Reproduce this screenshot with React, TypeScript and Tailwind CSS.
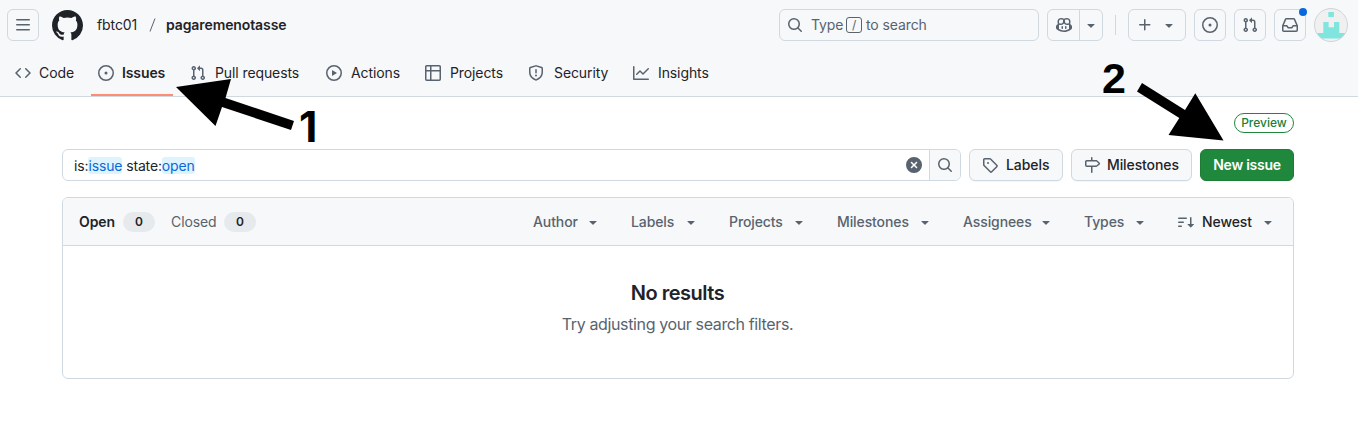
import type { ReactNode } from "react";

const paths = {
  bars: "M1 2.75A.75.75 0 0 1 1.75 2h12.5a.75.75 0 0 1 0 1.5H1.75A.75.75 0 0 1 1 2.75Zm0 5A.75.75 0 0 1 1.75 7h12.5a.75.75 0 0 1 0 1.5H1.75A.75.75 0 0 1 1 7.75ZM1.75 12h12.5a.75.75 0 0 1 0 1.5H1.75a.75.75 0 0 1 0-1.5Z",
  github:
    "M8 0c4.42 0 8 3.58 8 8a8.013 8.013 0 0 1-5.45 7.59c-.4.08-.55-.17-.55-.38 0-.27.01-1.13.01-2.2 0-.75-.25-1.23-.54-1.48 1.78-.2 3.65-.88 3.65-3.95 0-.88-.31-1.59-.82-2.15.08-.2.36-1.02-.08-2.12 0 0-.67-.22-2.2.82-.64-.18-1.32-.27-2-.27-.68 0-1.36.09-2 .27-1.53-1.03-2.2-.82-2.2-.82-.44 1.1-.16 1.92-.08 2.12-.51.56-.82 1.28-.82 2.15 0 3.06 1.86 3.75 3.64 3.95-.23.2-.44.55-.51 1.07-.46.21-1.61.55-2.33-.66-.15-.24-.6-.83-1.23-.82-.67.01-.27.38.01.53.34.19.73.9.82 1.13.16.45.68 1.31 2.69.94 0 .67.01 1.3.01 1.49 0 .21-.15.45-.55.38A7.995 7.995 0 0 1 0 8c0-4.42 3.58-8 8-8Z",
  code: "m11.28 3.22 4.25 4.25a.75.75 0 0 1 0 1.06l-4.25 4.25a.749.749 0 0 1-1.275-.326.749.749 0 0 1 .215-.734L13.94 8l-3.72-3.72a.749.749 0 0 1 .326-1.275.749.749 0 0 1 .734.215Zm-6.56 0a.751.751 0 0 1 1.042.018.751.751 0 0 1 .018 1.042L2.06 8l3.72 3.72a.749.749 0 0 1-.326 1.275.749.749 0 0 1-.734-.215L.47 8.53a.75.75 0 0 1 0-1.06Z",
  issue:
    "M8 9.5a1.5 1.5 0 1 0 0-3 1.5 1.5 0 0 0 0 3ZM8 0a8 8 0 1 1 0 16A8 8 0 0 1 8 0ZM1.5 8a6.5 6.5 0 1 0 13 0 6.5 6.5 0 0 0-13 0Z",
  pull: "M1.5 3.25a2.25 2.25 0 1 1 3 2.122v5.256a2.251 2.251 0 1 1-1.5 0V5.372A2.25 2.25 0 0 1 1.5 3.25Zm5.677-.177L9.573.677A.25.25 0 0 1 10 .854V2.5h1A2.5 2.5 0 0 1 13.5 5v5.628a2.251 2.251 0 1 1-1.5 0V5a1 1 0 0 0-1-1h-1v1.646a.25.25 0 0 1-.427.177L7.177 3.427a.25.25 0 0 1 0-.354ZM3.75 2.5a.75.75 0 1 0 0 1.5.75.75 0 0 0 0-1.5Zm0 9.5a.75.75 0 1 0 0 1.5.75.75 0 0 0 0-1.5Zm8.25.75a.75.75 0 1 0 1.5 0 .75.75 0 0 0-1.5 0Z",
  play: "M8 0a8 8 0 1 1 0 16A8 8 0 0 1 8 0ZM1.5 8a6.5 6.5 0 1 0 13 0 6.5 6.5 0 0 0-13 0Zm4.879-2.773 4.264 2.559a.25.25 0 0 1 0 .428l-4.264 2.559A.25.25 0 0 1 6 10.559V5.442a.25.25 0 0 1 .379-.215Z",
  table:
    "M0 1.75C0 .784.784 0 1.75 0h12.5C15.216 0 16 .784 16 1.75v12.5A1.75 1.75 0 0 1 14.25 16H1.75A1.75 1.75 0 0 1 0 14.25ZM6.5 6.5v8h7.75a.25.25 0 0 0 .25-.25V6.5Zm8-1.5V1.75a.25.25 0 0 0-.25-.25H6.5V5Zm-13 1.5v7.75c0 .138.112.25.25.25H5v-8ZM5 5V1.5H1.75a.25.25 0 0 0-.25.25V5Z",
  shield:
    "M7.467.133a1.748 1.748 0 0 1 1.066 0l5.25 1.68A1.75 1.75 0 0 1 15 3.48V7c0 1.566-.32 3.182-1.303 4.682-.983 1.498-2.585 2.813-5.032 3.855a1.697 1.697 0 0 1-1.33 0c-2.447-1.042-4.049-2.357-5.032-3.855C1.32 10.182 1 8.566 1 7V3.48a1.75 1.75 0 0 1 1.217-1.667Zm.61 1.429a.25.25 0 0 0-.153 0l-5.25 1.68a.25.25 0 0 0-.174.238V7c0 1.358.275 2.666 1.057 3.86.784 1.194 2.121 2.34 4.366 3.297a.196.196 0 0 0 .154 0c2.245-.956 3.582-2.104 4.366-3.298C13.225 9.666 13.5 8.36 13.5 7V3.48a.251.251 0 0 0-.174-.237l-5.25-1.68ZM8.75 4.75v3a.75.75 0 0 1-1.5 0v-3a.75.75 0 0 1 1.5 0ZM9 10.5a1 1 0 1 1-2 0 1 1 0 0 1 2 0Z",
  graph:
    "M1.5 1.75V13.5h13.75a.75.75 0 0 1 0 1.5H.75a.75.75 0 0 1-.75-.75V1.75a.75.75 0 0 1 1.5 0Zm14.28 2.53-5.25 5.25a.75.75 0 0 1-1.06 0L7 7.06 4.28 9.78a.751.751 0 0 1-1.042-.018.751.751 0 0 1-.018-1.042l3.25-3.25a.75.75 0 0 1 1.06 0L10 7.94l4.72-4.72a.751.751 0 0 1 1.042.018.751.751 0 0 1 .018 1.042Z",
  search:
    "M10.68 11.74a6 6 0 0 1-7.922-8.982 6 6 0 0 1 8.982 7.922l3.04 3.04a.749.749 0 0 1-.326 1.275.749.749 0 0 1-.734-.215ZM11.5 7a4.499 4.499 0 1 0-8.997 0A4.499 4.499 0 0 0 11.5 7Z",
  copilot:
    "M7.998 15.035c-4.562 0-7.873-2.914-7.998-3.749V9.338c.085-.628.677-1.686 1.588-2.065.013-.07.024-.143.036-.218.029-.183.06-.384.126-.612-.201-.508-.254-1.084-.254-1.656 0-.87.128-1.769.693-2.484.579-.733 1.494-1.124 2.724-1.261 1.206-.134 2.262.034 2.944.765.05.053.096.108.139.165.044-.057.094-.112.143-.165.682-.731 1.738-.899 2.944-.765 1.23.137 2.145.528 2.724 1.261.566.715.693 1.614.693 2.484 0 .572-.053 1.148-.254 1.656.066.228.098.429.126.612.012.076.024.148.037.218.924.385 1.522 1.471 1.591 2.095v1.872c0 .766-3.351 3.795-8.002 3.795Zm0-1.485c2.28 0 4.584-1.11 5.002-1.433V7.862l-.023-.116c-.49.21-1.075.291-1.727.291-1.146 0-2.059-.327-2.71-.991A3.222 3.222 0 0 1 8 6.303a3.24 3.24 0 0 1-.544.743c-.65.664-1.563.991-2.71.991-.652 0-1.236-.081-1.727-.291l-.023.116v4.255c.419.323 2.722 1.433 5.002 1.433ZM6.762 2.83c-.193-.206-.637-.413-1.682-.297-1.019.113-1.479.404-1.713.7-.247.312-.369.789-.369 1.554 0 .793.129 1.171.308 1.371.162.181.519.379 1.442.379.853 0 1.339-.235 1.638-.54.315-.322.527-.827.617-1.553.117-.935-.037-1.395-.241-1.614Zm4.155-.297c-1.044-.116-1.488.091-1.681.297-.204.219-.359.679-.242 1.614.091.726.303 1.231.618 1.553.299.305.784.54 1.638.54.922 0 1.28-.198 1.442-.379.179-.2.308-.578.308-1.371 0-.765-.123-1.242-.37-1.554-.233-.296-.693-.587-1.713-.7ZM6.25 9.037a.75.75 0 0 1 .75.75v1.501a.75.75 0 0 1-1.5 0V9.787a.75.75 0 0 1 .75-.75Zm4.25.75v1.501a.75.75 0 0 1-1.5 0V9.787a.75.75 0 0 1 1.5 0Z",
  caret: "m4.427 7.427 3.396 3.396a.25.25 0 0 0 .354 0l3.396-3.396A.25.25 0 0 0 11.396 7H4.604a.25.25 0 0 0-.177.427Z",
  plus: "M7.75 2a.75.75 0 0 1 .75.75V7h4.25a.75.75 0 0 1 0 1.5H8.5v4.25a.75.75 0 0 1-1.5 0V8.5H2.75a.75.75 0 0 1 0-1.5H7V2.75A.75.75 0 0 1 7.75 2Z",
  inbox:
    "M2.8 2.06A1.75 1.75 0 0 1 4.41 1h7.18c.7 0 1.333.417 1.61 1.06l2.74 6.395c.04.093.06.194.06.295v4.5A1.75 1.75 0 0 1 14.25 15H1.75A1.75 1.75 0 0 1 0 13.25v-4.5c0-.101.02-.202.06-.295Zm1.61.44a.25.25 0 0 0-.23.152L1.887 8H4.75a.75.75 0 0 1 .6.3L6.625 10h2.75l1.275-1.7a.75.75 0 0 1 .6-.3h2.863L11.82 2.652a.25.25 0 0 0-.23-.152Zm10.09 7h-2.875l-1.275 1.7a.75.75 0 0 1-.6.3h-3.5a.75.75 0 0 1-.6-.3L4.375 9.5H1.5v3.75c0 .138.112.25.25.25h12.5a.25.25 0 0 0 .25-.25Z",
  clear:
    "M2.343 13.657A8 8 0 1 1 13.658 2.343 8 8 0 0 1 2.343 13.657ZM6.03 4.97a.751.751 0 0 0-1.042.018.751.751 0 0 0-.018 1.042L6.94 8 4.97 9.97a.749.749 0 0 0 .326 1.275.749.749 0 0 0 .734-.215L8 9.06l1.97 1.97a.749.749 0 0 0 1.275-.326.749.749 0 0 0-.215-.734L9.06 8l1.97-1.97a.749.749 0 0 0-.326-1.275.749.749 0 0 0-.734.215L8 6.94Z",
  tag: "M1 7.775V2.75C1 1.784 1.784 1 2.75 1h5.025c.464 0 .91.184 1.238.513l6.25 6.25a1.75 1.75 0 0 1 0 2.474l-5.026 5.026a1.75 1.75 0 0 1-2.474 0l-6.25-6.25A1.752 1.752 0 0 1 1 7.775Zm1.5 0c0 .066.026.13.073.177l6.25 6.25a.25.25 0 0 0 .354 0l5.025-5.025a.25.25 0 0 0 0-.354l-6.25-6.25a.25.25 0 0 0-.177-.073H2.75a.25.25 0 0 0-.25.25ZM6 5a1 1 0 1 1 0 2 1 1 0 0 1 0-2Z",
  milestone:
    "M7.75 0a.75.75 0 0 1 .75.75V3h3.634c.414 0 .814.147 1.13.414l2.07 1.75a1.75 1.75 0 0 1 0 2.672l-2.07 1.75a1.75 1.75 0 0 1-1.13.414H8.5v5.25a.75.75 0 0 1-1.5 0V10H2.75A1.75 1.75 0 0 1 1 8.25v-3.5C1 3.784 1.784 3 2.75 3H7V.75A.75.75 0 0 1 7.75 0Zm4.384 8.5a.25.25 0 0 0 .161-.06l2.07-1.75a.248.248 0 0 0 0-.38l-2.07-1.75a.25.25 0 0 0-.161-.06H2.75a.25.25 0 0 0-.25.25v3.5c0 .138.112.25.25.25h9.384Z",
  sort: "M0 4.25a.75.75 0 0 1 .75-.75h7.5a.75.75 0 0 1 0 1.5H.75A.75.75 0 0 1 0 4.25Zm0 4a.75.75 0 0 1 .75-.75h4.5a.75.75 0 0 1 0 1.5H.75A.75.75 0 0 1 0 8.25Zm0 4a.75.75 0 0 1 .75-.75h2.5a.75.75 0 0 1 0 1.5H.75a.75.75 0 0 1-.75-.75ZM13.5 10h2.25a.25.25 0 0 1 .177.427l-3 3a.25.25 0 0 1-.354 0l-3-3A.25.25 0 0 1 9.75 10H12V3.75a.75.75 0 0 1 1.5 0V10Z",
};

type IconName = keyof typeof paths;

function Icon({ name, className = "size-4 text-[#59636e]" }: { name: IconName; className?: string }) {
  return (
    <svg viewBox="0 0 16 16" className={`shrink-0 ${className}`} fill="currentColor" fillRule="evenodd" aria-hidden="true">
      <path d={paths[name]} />
    </svg>
  );
}

const tabs: { icon: IconName; label: string; width: string; gap: string; active?: boolean }[] = [
  { icon: "code", label: "Code", width: "w-[75px]", gap: "gap-2" },
  { icon: "issue", label: "Issues", width: "w-[84px]", gap: "gap-2", active: true },
  { icon: "pull", label: "Pull requests", width: "w-[128px]", gap: "gap-[9px]" },
  { icon: "play", label: "Actions", width: "w-[91px]", gap: "gap-[9px]" },
  { icon: "table", label: "Projects", width: "w-[95px]", gap: "gap-[9px]" },
  { icon: "shield", label: "Security", width: "w-[97px]", gap: "gap-[10px]" },
  { icon: "graph", label: "Insights", width: "w-[94px]", gap: "gap-[9px]" },
];

const filters = [
  { label: "Author", width: "w-[68px]" },
  { label: "Labels", width: "w-[68px]" },
  { label: "Projects", width: "w-[78px]" },
  { label: "Milestones", width: "w-[96px]" },
  { label: "Assignees", width: "w-[91px]" },
  { label: "Types", width: "w-[64px]" },
];

function HeaderButton({ children }: { children: ReactNode }) {
  return (
    <button className="relative flex size-8 shrink-0 items-center justify-center rounded-md border border-[#d1d9e0]">
      {children}
    </button>
  );
}

function Header() {
  return (
    <header className="flex h-[97px] flex-col border-b border-[#d1d9e0] bg-[#f6f8fa]">
      <div className="flex h-[50px] items-center pr-[10px] pl-[7px]">
        <HeaderButton>
          <Icon name="bars" />
        </HeaderButton>
        <Icon name="github" className="ml-[13px] h-[31px] w-[31px] text-[#1f2328]" />
        <span className="ml-[14px] w-[42px]">fbtc01</span>
        <svg viewBox="0 0 7 16" className="ml-[10px] h-4 w-[7px] shrink-0" aria-hidden="true">
          <path d="M1 14.5 6 1.5" stroke="#59636e" strokeWidth="1" />
        </svg>
        <span className="ml-[10px] font-semibold">pagaremenotasse</span>
        <div className="ml-auto flex items-center">
          <div className="flex h-8 w-[260px] items-center rounded-md border border-[#d1d9e0] pl-[7px] text-[#59636e]">
            <Icon name="search" />
            <span className="ml-2 w-[30px]">Type</span>
            <kbd className="ml-[5px] flex h-4 w-4 items-center justify-center rounded-[3px] border border-[#59636e] font-[Inter] text-xs">
              /
            </kbd>
            <span className="ml-1">to search</span>
          </div>
          <div className="ml-2 flex h-8 w-14 rounded-md border border-[#d1d9e0]">
            <div className="flex w-8 items-center justify-center border-r border-[#d1d9e0]">
              <Icon name="copilot" />
            </div>
            <div className="flex flex-1 items-center justify-center">
              <Icon name="caret" />
            </div>
          </div>
          <div className="ml-3 h-5 w-px bg-[#d1d9e0]" />
          <div className="ml-3 flex h-8 w-[58px] items-center justify-between rounded-md border border-[#d1d9e0] px-2">
            <Icon name="plus" />
            <Icon name="caret" />
          </div>
          <div className="ml-2 flex gap-2">
            <HeaderButton>
              <Icon name="issue" />
            </HeaderButton>
            <HeaderButton>
              <Icon name="pull" />
            </HeaderButton>
            <HeaderButton>
              <Icon name="inbox" />
              <span className="absolute -top-[2px] -right-[2px] size-2 rounded-full bg-[#0969da]" />
            </HeaderButton>
          </div>
          <svg viewBox="0 0 34 34" className="ml-2 h-[34px] w-[34px] shrink-0" aria-hidden="true">
            <clipPath id="avatar">
              <circle cx="17" cy="17" r="16.5" />
            </clipPath>
            <g clipPath="url(#avatar)">
              <path fill="#f0f0f0" d="M0 0h34v34H0z" />
              <path fill="#80e5df" d="M14.300 4h5.600v5h-5.600zM9.300 14h5.300v5.300H20V14h5.300v11H31v5.500H3.500V25h5.800z" />
            </g>
            <circle cx="17" cy="17" r="16.5" fill="none" stroke="#d0d4d8" />
          </svg>
        </div>
      </div>
      <nav className="flex h-[46px] items-stretch pl-[7px]">
        {tabs.map((tab) => (
          <a key={tab.label} className={`mr-2 flex shrink-0 flex-col ${tab.width}`}>
            <span className={`flex h-11 items-center pt-[2px] pl-2 ${tab.gap}`}>
              <Icon name={tab.icon} />
              <span className={tab.active ? "font-semibold" : ""}>{tab.label}</span>
            </span>
            {tab.active && <span className="ml-px h-[2px] w-[82px] bg-[#fd8c73]" />}
          </a>
        ))}
      </nav>
    </header>
  );
}

function Toolbar() {
  return (
    <div className="mt-4 flex h-8 gap-2">
      <div className="flex w-[899px] overflow-hidden rounded-md border border-[#d1d9e0]">
        <div className="flex flex-1 items-center pr-[7px] pl-[11px]">
          <p className="flex-1 pt-[2px] tracking-[-0.14px] whitespace-pre">
            is:<span className="rounded-[3px] bg-[#ddf4ff] text-[#0969da]">issue</span> state:
            <span className="rounded-[3px] bg-[#ddf4ff] text-[#0969da]">open</span>
          </p>
          <Icon name="clear" />
        </div>
        <button className="flex w-[31px] items-center justify-center border-l border-[#d1d9e0] bg-[#f6f8fa]">
          <Icon name="search" />
        </button>
      </div>
      <button className="flex w-[94px] items-center gap-2 rounded-md border border-[#d1d9e0] bg-[#f6f8fa] pl-3 font-medium tracking-[-0.05px] shadow-[0_1px_0_#1f23280a]">
        <Icon name="tag" />
        Labels
      </button>
      <button className="flex w-[121px] items-center gap-[7px] rounded-md border border-[#d1d9e0] bg-[#f6f8fa] pl-3 font-medium shadow-[0_1px_0_#1f23280a]">
        <Icon name="milestone" />
        Milestones
      </button>
      <button className="flex w-[94px] items-center justify-center rounded-md border border-[#1c7c36] bg-[#1f883d] font-semibold tracking-[-0.25px] text-white">
        New issue
      </button>
    </div>
  );
}

function Counter({ children }: { children: ReactNode }) {
  return (
    <span className="flex h-5 w-8 items-center justify-center rounded-full bg-[#e7eaed] text-xs font-semibold text-[#1f2328]">
      {children}
    </span>
  );
}

function IssueList() {
  return (
    <section className="mt-4 h-[182px] overflow-hidden rounded-md border border-[#d1d9e0]">
      <div className="flex h-12 items-center border-b border-[#d1d9e0] bg-[#f6f8fa] pl-4 text-[#59636e]">
        <span className="w-9 font-semibold text-[#1f2328]">Open</span>
        <span className="ml-2">
          <Counter>0</Counter>
        </span>
        <span className="ml-4 w-[45px]">Closed</span>
        <span className="ml-2">
          <Counter>0</Counter>
        </span>
        <div className="ml-auto flex pr-[17px]">
          {filters.map((f) => (
            <span key={f.label} className={`mr-[30px] flex items-center justify-between font-medium ${f.width}`}>
              {f.label}
              <Icon name="caret" />
            </span>
          ))}
          <span className="flex w-[98px] items-center font-medium text-[#1f2328]">
            <Icon name="sort" />
            <span className="ml-2">Newest</span>
            <Icon name="caret" className="ml-auto size-4 text-[#59636e]" />
          </span>
        </div>
      </div>
      <div className="flex flex-col items-center pt-8 pr-px">
        <h2 className="text-xl leading-[30px] font-semibold tracking-[-0.5px]">No results</h2>
        <p className="mt-1 text-base leading-6 tracking-[-0.37px] text-[#59636e]">Try adjusting your search filters.</p>
      </div>
    </section>
  );
}

function Annotations() {
  return (
    <svg viewBox="0 0 1358 439" className="pointer-events-none absolute top-0 left-0 h-[439px] w-[1358px]" aria-hidden="true">
      <path d="M176 87 231 79 225.500 98 294 121 291 130 222 107 215.500 126Z" />
      <path d="M1142 83 1185 110 1195.300 93.300 1223.500 140.500 1168.500 135 1179.300 118 1137 91.500Z" />
      <text x="299" y="142" className="font-[Inter] text-[42.5px] font-bold">
        1
      </text>
      <text x="1102" y="93" className="font-['Liberation_Sans'] text-[43px] font-bold">
        2
      </text>
    </svg>
  );
}

export default function App() {
  return (
    <div className="relative h-[439px] w-[1358px] overflow-hidden bg-white font-[Inter,sans-serif] text-sm leading-5 tracking-[-0.1px] whitespace-nowrap text-[#1f2328]">
      <Header />
      <main className="px-16 pt-4 pl-[62px]">
        <div className="flex justify-end">
          <span className="flex h-5 w-[60px] items-center justify-center rounded-full border border-[#1f883d] text-xs font-medium tracking-normal text-[#1a7f37]">
            Preview
          </span>
        </div>
        <Toolbar />
        <IssueList />
      </main>
      <Annotations />
    </div>
  );
}
